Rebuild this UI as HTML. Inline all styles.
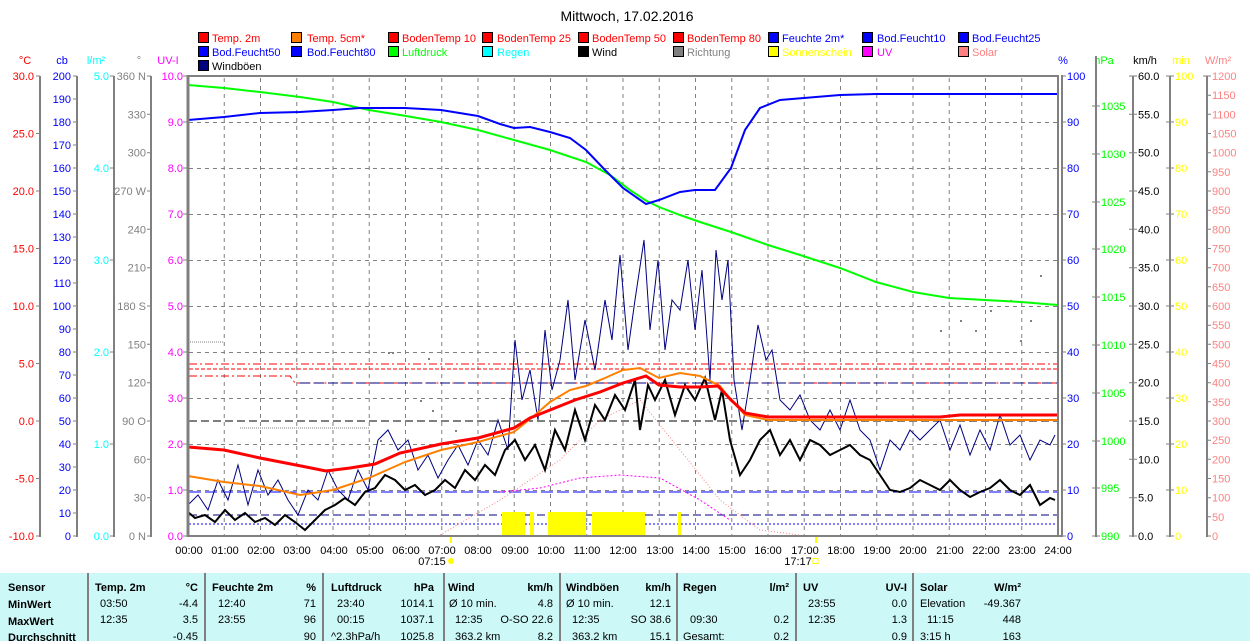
<!DOCTYPE html>
<html><head><meta charset="utf-8"><style>
html,body{margin:0;padding:0;background:#fff;}
svg{display:block;font-family:"Liberation Sans",sans-serif;font-size:11px;}
</style></head><body>
<svg width="1250" height="641" viewBox="0 0 1250 641" xmlns="http://www.w3.org/2000/svg">
<rect width="1250" height="641" fill="#fff"/>
<text x="627" y="21" text-anchor="middle" font-size="14" fill="#000">Mittwoch, 17.02.2016</text>

<!-- legend -->
<g stroke="#000" stroke-width="1">
<rect x="198.5" y="32.5" width="10" height="10" fill="#f00"/><rect x="291.5" y="32.5" width="10" height="10" fill="#ff8000"/><rect x="388.5" y="32.5" width="10" height="10" fill="#f00"/><rect x="482.5" y="32.5" width="10" height="10" fill="#f00"/><rect x="578.5" y="32.5" width="10" height="10" fill="#f00"/><rect x="673.5" y="32.5" width="10" height="10" fill="#f00"/><rect x="768.5" y="32.5" width="10" height="10" fill="#00f"/><rect x="862.5" y="32.5" width="10" height="10" fill="#00f"/><rect x="958.5" y="32.5" width="10" height="10" fill="#00f"/>
<rect x="198.5" y="46.5" width="10" height="10" fill="#00f"/><rect x="291.5" y="46.5" width="10" height="10" fill="#00f"/><rect x="388.5" y="46.5" width="10" height="10" fill="#0f0"/><rect x="482.5" y="46.5" width="10" height="10" fill="#0ff"/><rect x="578.5" y="46.5" width="10" height="10" fill="#000"/><rect x="673.5" y="46.5" width="10" height="10" fill="#808080"/><rect x="768.5" y="46.5" width="10" height="10" fill="#ff0"/><rect x="862.5" y="46.5" width="10" height="10" fill="#f0f"/><rect x="958.5" y="46.5" width="10" height="10" fill="#ff8080"/>
<rect x="198.5" y="60.5" width="10" height="10" fill="#000080"/>
</g>
<g>
<text x="212" y="42" fill="#f00">Temp. 2m</text><text x="307" y="42" fill="#f00">Temp. 5cm*</text><text x="402" y="42" fill="#f00">BodenTemp 10</text><text x="497" y="42" fill="#f00">BodenTemp 25</text><text x="592" y="42" fill="#f00">BodenTemp 50</text><text x="687" y="42" fill="#f00">BodenTemp 80</text><text x="782" y="42" fill="#00f">Feuchte 2m*</text><text x="877" y="42" fill="#00f">Bod.Feucht10</text><text x="972" y="42" fill="#00f">Bod.Feucht25</text>
<text x="212" y="56" fill="#00f">Bod.Feucht50</text><text x="307" y="56" fill="#00f">Bod.Feucht80</text><text x="402" y="56" fill="#0f0">Luftdruck</text><text x="497" y="56" fill="#0ff">Regen</text><text x="592" y="56" fill="#000">Wind</text><text x="687" y="56" fill="#808080">Richtung</text><text x="782" y="56" fill="#ff0">Sonnenschein</text><text x="877" y="56" fill="#f0f">UV</text><text x="972" y="56" fill="#ff8080">Solar</text>
<text x="212" y="70" fill="#000">Windböen</text>
</g>

<!-- unit labels -->
<text x="25" y="64" fill="#f00" text-anchor="middle">°C</text>
<text x="62" y="64" fill="#00f" text-anchor="middle">cb</text>
<text x="96" y="64" fill="#0ff" text-anchor="middle">l/m²</text>
<text x="139" y="64" fill="#808080" text-anchor="middle">°</text>
<text x="168" y="64" fill="#f0f" text-anchor="middle">UV-I</text>
<text x="1063" y="64" fill="#00f" text-anchor="middle">%</text>
<text x="1104" y="64" fill="#0f0" text-anchor="middle">hPa</text>
<text x="1145" y="64" fill="#000" text-anchor="middle">km/h</text>
<text x="1181" y="64" fill="#ff0" text-anchor="middle">min</text>
<text x="1218" y="64" fill="#ff8080" text-anchor="middle">W/m²</text>

<!-- axis lines -->
<g stroke="#808080" stroke-width="2">
<line x1="40" y1="76" x2="40" y2="537"/><line x1="77" y1="76" x2="77" y2="537"/><line x1="114" y1="76" x2="114" y2="537"/><line x1="151" y1="76" x2="151" y2="537"/>
<line x1="1096" y1="56" x2="1096" y2="537"/><line x1="1133" y1="76" x2="1133" y2="537"/><line x1="1170" y1="76" x2="1170" y2="537"/><line x1="1207" y1="76" x2="1207" y2="537"/>
</g>

<!-- grid -->
<g stroke="#808080" stroke-width="1" stroke-dasharray="4,4">
<line x1="224.25" y1="78" x2="224.25" y2="535"/><line x1="260.5" y1="78" x2="260.5" y2="535"/><line x1="296.75" y1="78" x2="296.75" y2="535"/><line x1="333" y1="78" x2="333" y2="535"/><line x1="369.25" y1="78" x2="369.25" y2="535"/><line x1="405.5" y1="78" x2="405.5" y2="535"/><line x1="441.75" y1="78" x2="441.75" y2="535"/><line x1="478" y1="78" x2="478" y2="535"/><line x1="514.25" y1="78" x2="514.25" y2="535"/><line x1="550.5" y1="78" x2="550.5" y2="535"/><line x1="586.75" y1="78" x2="586.75" y2="535"/><line x1="623" y1="78" x2="623" y2="535"/><line x1="659.25" y1="78" x2="659.25" y2="535"/><line x1="695.5" y1="78" x2="695.5" y2="535"/><line x1="731.75" y1="78" x2="731.75" y2="535"/><line x1="768" y1="78" x2="768" y2="535"/><line x1="804.25" y1="78" x2="804.25" y2="535"/><line x1="840.5" y1="78" x2="840.5" y2="535"/><line x1="876.75" y1="78" x2="876.75" y2="535"/><line x1="913" y1="78" x2="913" y2="535"/><line x1="949.25" y1="78" x2="949.25" y2="535"/><line x1="985.5" y1="78" x2="985.5" y2="535"/><line x1="1021.75" y1="78" x2="1021.75" y2="535"/>
<line x1="189" y1="122.5" x2="1057" y2="122.5"/><line x1="189" y1="168.5" x2="1057" y2="168.5"/><line x1="189" y1="214.5" x2="1057" y2="214.5"/><line x1="189" y1="260.5" x2="1057" y2="260.5"/><line x1="189" y1="306.5" x2="1057" y2="306.5"/><line x1="189" y1="352.5" x2="1057" y2="352.5"/><line x1="189" y1="398.5" x2="1057" y2="398.5"/><line x1="189" y1="444.5" x2="1057" y2="444.5"/><line x1="189" y1="490.5" x2="1057" y2="490.5"/>
</g>

<!-- horizontal reference lines -->
<g fill="none" stroke-width="1">
<polyline points="189,364 1057,364" stroke="#f00" stroke-dasharray="8,3,2,3"/>
<polyline points="189,369 1057,369" stroke="#f00" stroke-dasharray="4,2"/>
<polyline points="189,376 290,376 295,383 1057,383" stroke="#f00" stroke-dasharray="8,3,2,3"/>
<polyline points="300,383 1057,383" stroke="#000080" stroke-dasharray="10,4"/>
<polyline points="189,421 1057,421" stroke="#000" stroke-dasharray="8,4"/>
<polyline points="189,492 1057,492" stroke="#00f" stroke-dasharray="12,4"/>
<polyline points="189,515 1057,515" stroke="#000080" stroke-dasharray="8,4"/>
<polyline points="189,524 1057,524" stroke="#00f" stroke-dasharray="2,2"/>
<polyline points="190,342 224,342" stroke="#808080" stroke-dasharray="1,1"/>
<polyline points="240,428 370,428" stroke="#808080" stroke-dasharray="1,1"/>
<polyline points="500,492 540,488 580,478 620,475 660,478 700,500 730,520" stroke="#f0f" stroke-dasharray="2,2"/>
<polyline points="440,535 500,500 560,460 600,420 640,400 680,450 720,500 760,530 800,535" stroke="#ff8080" stroke-dasharray="1,2"/>
</g>

<!-- sunshine bars -->
<g fill="#ff0">
<rect x="502" y="512" width="23" height="23"/><rect x="530" y="512" width="4" height="23"/><rect x="548" y="512" width="38" height="23"/><rect x="592" y="512" width="53" height="23"/><rect x="678" y="512" width="3" height="23"/>
</g>

<!-- richtung dots -->
<g fill="#808080">
<rect x="388" y="352" width="2" height="2"/><rect x="392" y="352" width="2" height="2"/><rect x="428" y="358" width="2" height="2"/><rect x="420" y="400" width="2" height="2"/><rect x="432" y="410" width="2" height="2"/><rect x="380" y="440" width="2" height="2"/><rect x="455" y="430" width="2" height="2"/><rect x="960" y="320" width="2" height="2"/><rect x="975" y="330" width="2" height="2"/><rect x="990" y="310" width="2" height="2"/><rect x="1010" y="300" width="2" height="2"/><rect x="1030" y="320" width="2" height="2"/><rect x="1040" y="275" width="2" height="2"/><rect x="940" y="330" width="2" height="2"/><rect x="1020" y="340" width="2" height="2"/>
</g>

<!-- gusts (navy) -->
<polyline fill="none" stroke="#000080" stroke-width="1" points="188,505 198,495 208,510 218,480 228,500 238,465 248,505 258,470 268,495 278,480 288,500 298,515 308,490 318,500 328,470 338,490 348,500 358,470 368,490 378,440 388,430 398,450 408,440 418,470 428,455 438,478 448,460 458,445 468,465 478,440 488,455 498,420 508,450 515,340 522,400 530,370 538,420 545,330 552,390 560,360 568,300 575,380 585,320 595,370 605,300 612,340 620,255 628,350 635,300 644,240 650,330 658,260 665,350 672,300 680,310 688,260 695,330 702,270 710,380 716,250 722,300 728,260 734,380 742,430 750,380 758,325 766,360 772,350 780,400 790,410 800,395 810,420 820,430 830,410 840,430 850,400 860,430 870,440 880,470 890,440 900,450 910,430 920,440 930,430 940,420 950,450 960,425 970,455 980,430 990,450 1000,415 1010,445 1020,435 1030,460 1040,440 1050,445 1055,435"/>

<!-- wind black -->
<polyline fill="none" stroke="#000" stroke-width="2" points="188,512 195,518 205,515 215,522 225,510 235,520 245,513 255,522 265,518 275,525 285,515 295,522 305,530 315,520 325,510 335,505 345,498 355,505 365,492 375,488 385,475 395,480 405,490 415,485 425,495 435,490 445,480 455,488 465,470 475,480 485,465 495,475 505,450 515,440 525,460 535,445 545,470 555,430 565,450 575,410 585,440 595,405 605,420 615,395 625,410 635,380 640,430 648,385 655,400 665,380 675,415 685,385 695,400 705,378 715,420 722,390 730,440 740,475 750,460 760,440 770,430 780,455 790,440 800,460 810,440 820,445 830,455 840,450 850,445 860,455 870,460 880,475 890,490 900,492 910,488 920,480 930,485 940,490 950,480 960,490 970,497 980,492 990,488 1000,480 1010,490 1020,495 1030,485 1040,505 1050,498 1055,500"/>

<!-- temp 5cm orange -->
<polyline fill="none" stroke="#ff8000" stroke-width="2" points="188,476 224,482 260,486 300,495 333,490 369,478 405,462 441,450 478,442 514,432 535,415 550,402 570,390 586,386 605,378 623,370 640,368 659,378 680,373 700,376 720,386 731,400 745,415 768,420 1058,420"/>
<!-- temp 2m red -->
<polyline fill="none" stroke="#f00" stroke-width="3" points="188,447 224,450 260,458 296,465 326,471 350,468 375,464 400,453 441,444 478,438 514,428 530,418 550,410 575,400 600,392 623,383 646,376 659,385 680,387 700,387 718,386 731,400 745,413 768,417 940,417 960,415 1058,415"/>

<!-- pressure green -->
<polyline fill="none" stroke="#0f0" stroke-width="2" points="188,85 224,88 260,92 300,97 333,102 369,110 400,115 441,122 478,130 514,140 550,150 586,162 610,175 630,190 645,200 659,207 680,215 700,222 731,232 768,245 800,255 840,268 876,282 913,292 949,298 985,300 1021,302 1058,305"/>

<!-- humidity blue -->
<polyline fill="none" stroke="#00f" stroke-width="2" points="188,120 224,117 260,113 300,112 333,110 360,108 405,108 441,110 478,116 500,124 514,128 530,127 550,132 570,138 586,150 605,170 623,188 646,204 659,200 680,192 695,190 715,190 731,168 745,130 760,108 780,100 804,98 840,95 876,94 1058,94"/>

<!-- plot frame -->
<g stroke="#808080" fill="none">
<line x1="188" y1="76" x2="1058" y2="76" stroke-width="2"/>
<line x1="188" y1="75" x2="188" y2="537" stroke-width="3"/>
<line x1="1058" y1="75" x2="1058" y2="537" stroke-width="2"/>
<line x1="1062" y1="75" x2="1062" y2="537" stroke-width="2"/>
<line x1="188" y1="536" x2="1062" y2="536" stroke-width="2"/>
</g>

<!-- ticks -->
<g stroke="#808080" stroke-width="1">
<path d="M36 76H40M36 133.5H40M36 191H40M36 248.5H40M36 306H40M36 363.5H40M36 421H40M36 478.5H40M36 536H40"/>
<path d="M73 76H77M73 99H77M73 122H77M73 145H77M73 168H77M73 191H77M73 214H77M73 237H77M73 260H77M73 283H77M73 306H77M73 329H77M73 352H77M73 375H77M73 398H77M73 421H77M73 444H77M73 467H77M73 490H77M73 513H77M73 536H77"/>
<path d="M110 76H114M110 168H114M110 260H114M110 352H114M110 444H114M110 536H114"/>
<path d="M147 76H151M147 114.3H151M147 152.7H151M147 191H151M147 229.3H151M147 267.7H151M147 306H151M147 344.3H151M147 382.7H151M147 421H151M147 459.3H151M147 497.7H151M147 536H151"/>
<path d="M1062 76H1066M1062 122H1066M1062 168H1066M1062 214H1066M1062 260H1066M1062 306H1066M1062 352H1066M1062 398H1066M1062 444H1066M1062 490H1066M1062 536H1066"/>
<path d="M1092 106H1100M1092 154H1100M1092 202H1100M1092 249H1100M1092 297H1100M1092 345H1100M1092 393H1100M1092 441H1100M1092 488H1100M1092 536H1100"/>
<path d="M1129 76H1137M1129 114.3H1137M1129 152.7H1137M1129 191H1137M1129 229.3H1137M1129 267.7H1137M1129 306H1137M1129 344.3H1137M1129 382.7H1137M1129 421H1137M1129 459.3H1137M1129 497.7H1137M1129 536H1137"/>
<path d="M1166 76H1174M1166 122H1174M1166 168H1174M1166 214H1174M1166 260H1174M1166 306H1174M1166 352H1174M1166 398H1174M1166 444H1174M1166 490H1174M1166 536H1174"/>
<path d="M1203 76H1211M1207 95.2H1211M1207 114.3H1211M1207 133.5H1211M1207 152.7H1211M1207 171.8H1211M1207 191H1211M1207 210.2H1211M1207 229.3H1211M1207 248.5H1211M1207 267.7H1211M1207 286.8H1211M1207 306H1211M1207 325.2H1211M1207 344.3H1211M1207 363.5H1211M1207 382.7H1211M1207 401.8H1211M1207 421H1211M1207 440.2H1211M1207 459.3H1211M1207 478.5H1211M1207 497.7H1211M1207 516.8H1211M1207 536H1211"/>
<path d="M183 76H188M183 122H188M183 168H188M183 214H188M183 260H188M183 306H188M183 352H188M183 398H188M183 444H188M183 490H188M183 536H188"/>
</g>

<!-- left labels -->
<g fill="#f00" text-anchor="end"><text x="34" y="80">30.0</text><text x="34" y="137.5">25.0</text><text x="34" y="195">20.0</text><text x="34" y="252.5">15.0</text><text x="34" y="310">10.0</text><text x="34" y="367.5">5.0</text><text x="34" y="425">0.0</text><text x="34" y="482.5">-5.0</text><text x="34" y="540">-10.0</text></g>
<g fill="#00f" text-anchor="end"><text x="71" y="80">200</text><text x="71" y="103">190</text><text x="71" y="126">180</text><text x="71" y="149">170</text><text x="71" y="172">160</text><text x="71" y="195">150</text><text x="71" y="218">140</text><text x="71" y="241">130</text><text x="71" y="264">120</text><text x="71" y="287">110</text><text x="71" y="310">100</text><text x="71" y="333">90</text><text x="71" y="356">80</text><text x="71" y="379">70</text><text x="71" y="402">60</text><text x="71" y="425">50</text><text x="71" y="448">40</text><text x="71" y="471">30</text><text x="71" y="494">20</text><text x="71" y="517">10</text><text x="71" y="540">0</text></g>
<g fill="#0ff" text-anchor="end"><text x="109" y="80">5.0</text><text x="109" y="172">4.0</text><text x="109" y="264">3.0</text><text x="109" y="356">2.0</text><text x="109" y="448">1.0</text><text x="109" y="540">0.0</text></g>
<g fill="#808080" text-anchor="end"><text x="146" y="80">360 N</text><text x="146" y="118.3">330</text><text x="146" y="156.7">300</text><text x="146" y="195">270 W</text><text x="146" y="233.3">240</text><text x="146" y="271.7">210</text><text x="146" y="310">180 S</text><text x="146" y="348.3">150</text><text x="146" y="386.7">120</text><text x="146" y="425">90 O</text><text x="146" y="463.3">60</text><text x="146" y="501.7">30</text><text x="146" y="540">0 N</text></g>
<g fill="#f0f" text-anchor="end"><text x="183" y="80">10.0</text><text x="183" y="126">9.0</text><text x="183" y="172">8.0</text><text x="183" y="218">7.0</text><text x="183" y="264">6.0</text><text x="183" y="310">5.0</text><text x="183" y="356">4.0</text><text x="183" y="402">3.0</text><text x="183" y="448">2.0</text><text x="183" y="494">1.0</text><text x="183" y="540">0.0</text></g>

<!-- right labels -->
<g fill="#00f"><text x="1067" y="80">100</text><text x="1067" y="126">90</text><text x="1067" y="172">80</text><text x="1067" y="218">70</text><text x="1067" y="264">60</text><text x="1067" y="310">50</text><text x="1067" y="356">40</text><text x="1067" y="402">30</text><text x="1067" y="448">20</text><text x="1067" y="494">10</text><text x="1067" y="540">0</text></g>
<g fill="#0f0"><text x="1101" y="110">1035</text><text x="1101" y="158">1030</text><text x="1101" y="206">1025</text><text x="1101" y="253">1020</text><text x="1101" y="301">1015</text><text x="1101" y="349">1010</text><text x="1101" y="397">1005</text><text x="1101" y="445">1000</text><text x="1101" y="492">995</text><text x="1101" y="540">990</text></g>
<g fill="#000"><text x="1138" y="80">60.0</text><text x="1138" y="118.3">55.0</text><text x="1138" y="156.7">50.0</text><text x="1138" y="195">45.0</text><text x="1138" y="233.3">40.0</text><text x="1138" y="271.7">35.0</text><text x="1138" y="310">30.0</text><text x="1138" y="348.3">25.0</text><text x="1138" y="386.7">20.0</text><text x="1138" y="425">15.0</text><text x="1138" y="463.3">10.0</text><text x="1138" y="501.7">5.0</text><text x="1138" y="540">0.0</text></g>
<g fill="#ff0"><text x="1175" y="80">100</text><text x="1175" y="126">90</text><text x="1175" y="172">80</text><text x="1175" y="218">70</text><text x="1175" y="264">60</text><text x="1175" y="310">50</text><text x="1175" y="356">40</text><text x="1175" y="402">30</text><text x="1175" y="448">20</text><text x="1175" y="494">10</text><text x="1175" y="540">0</text></g>
<g fill="#ff8080"><text x="1212" y="80">1200</text><text x="1212" y="99.2">1150</text><text x="1212" y="118.3">1100</text><text x="1212" y="137.5">1050</text><text x="1212" y="156.7">1000</text><text x="1212" y="175.8">950</text><text x="1212" y="195">900</text><text x="1212" y="214.2">850</text><text x="1212" y="233.3">800</text><text x="1212" y="252.5">750</text><text x="1212" y="271.7">700</text><text x="1212" y="290.8">650</text><text x="1212" y="310">600</text><text x="1212" y="329.2">550</text><text x="1212" y="348.3">500</text><text x="1212" y="367.5">450</text><text x="1212" y="386.7">400</text><text x="1212" y="405.8">350</text><text x="1212" y="425">300</text><text x="1212" y="444.2">250</text><text x="1212" y="463.3">200</text><text x="1212" y="482.5">150</text><text x="1212" y="501.7">100</text><text x="1212" y="520.8">50</text><text x="1212" y="540">0</text></g>

<!-- time labels -->
<g fill="#000" text-anchor="middle"><text x="189" y="554">00:00</text><text x="225" y="554">01:00</text><text x="261" y="554">02:00</text><text x="297" y="554">03:00</text><text x="334" y="554">04:00</text><text x="370" y="554">05:00</text><text x="406" y="554">06:00</text><text x="442" y="554">07:00</text><text x="478" y="554">08:00</text><text x="515" y="554">09:00</text><text x="551" y="554">10:00</text><text x="587" y="554">11:00</text><text x="623" y="554">12:00</text><text x="660" y="554">13:00</text><text x="696" y="554">14:00</text><text x="732" y="554">15:00</text><text x="768" y="554">16:00</text><text x="805" y="554">17:00</text><text x="841" y="554">18:00</text><text x="877" y="554">19:00</text><text x="913" y="554">20:00</text><text x="950" y="554">21:00</text><text x="986" y="554">22:00</text><text x="1022" y="554">23:00</text><text x="1058" y="554">24:00</text>
<text x="432" y="565">07:15</text><text x="798" y="565">17:17</text></g>
<rect x="450" y="537" width="2" height="6" fill="#ff0"/><circle cx="451" cy="561" r="3" fill="#ff0"/>
<rect x="815" y="537" width="2" height="6" fill="#ff0"/><rect x="813" y="558.5" width="5" height="5" fill="none" stroke="#ff0"/>

<!-- table -->
<rect x="0" y="573" width="1250" height="68" fill="#ccf8f8"/>
<g stroke="#808080" stroke-width="2"><line x1="88" y1="573" x2="88" y2="641"/><line x1="205" y1="573" x2="205" y2="641"/><line x1="323" y1="573" x2="323" y2="641"/><line x1="444" y1="573" x2="444" y2="641"/><line x1="560" y1="573" x2="560" y2="641"/><line x1="677" y1="573" x2="677" y2="641"/><line x1="796" y1="573" x2="796" y2="641"/><line x1="913" y1="573" x2="913" y2="641"/></g>
<g fill="#000" font-weight="bold">
<text x="8" y="591">Sensor</text><text x="8" y="608">MinWert</text><text x="8" y="625">MaxWert</text><text x="8" y="641">Durchschnitt</text>
<text x="95" y="591">Temp. 2m</text><text x="198" y="591" text-anchor="end">°C</text>
<text x="212" y="591">Feuchte 2m</text><text x="316" y="591" text-anchor="end">%</text>
<text x="331" y="591">Luftdruck</text><text x="434" y="591" text-anchor="end">hPa</text>
<text x="448" y="591">Wind</text><text x="553" y="591" text-anchor="end">km/h</text>
<text x="566" y="591">Windböen</text><text x="671" y="591" text-anchor="end">km/h</text>
<text x="683" y="591">Regen</text><text x="789" y="591" text-anchor="end">l/m²</text>
<text x="803" y="591">UV</text><text x="907" y="591" text-anchor="end">UV-I</text>
<text x="920" y="591">Solar</text><text x="1021" y="591" text-anchor="end">W/m²</text>
</g>
<g fill="#000">
<text x="100" y="607">03:50</text><text x="198" y="607" text-anchor="end">-4.4</text>
<text x="100" y="623">12:35</text><text x="198" y="623" text-anchor="end">3.5</text>
<text x="198" y="640" text-anchor="end">-0.45</text>
<text x="218" y="607">12:40</text><text x="316" y="607" text-anchor="end">71</text>
<text x="218" y="623">23:55</text><text x="316" y="623" text-anchor="end">96</text>
<text x="316" y="640" text-anchor="end">90</text>
<text x="337" y="607">23:40</text><text x="434" y="607" text-anchor="end">1014.1</text>
<text x="337" y="623">00:15</text><text x="434" y="623" text-anchor="end">1037.1</text>
<text x="331" y="640">^2.3hPa/h</text><text x="434" y="640" text-anchor="end">1025.8</text>
<text x="449" y="607">Ø 10 min.</text><text x="553" y="607" text-anchor="end">4.8</text>
<text x="455" y="623">12:35</text><text x="553" y="623" text-anchor="end">O-SO 22.6</text>
<text x="455" y="640">363.2 km</text><text x="553" y="640" text-anchor="end">8.2</text>
<text x="566" y="607">Ø 10 min.</text><text x="671" y="607" text-anchor="end">12.1</text>
<text x="572" y="623">12:35</text><text x="671" y="623" text-anchor="end">SO 38.6</text>
<text x="572" y="640">363.2 km</text><text x="671" y="640" text-anchor="end">15.1</text>
<text x="690" y="623">09:30</text><text x="789" y="623" text-anchor="end">0.2</text>
<text x="683" y="640">Gesamt:</text><text x="789" y="640" text-anchor="end">0.2</text>
<text x="808" y="607">23:55</text><text x="907" y="607" text-anchor="end">0.0</text>
<text x="808" y="623">12:35</text><text x="907" y="623" text-anchor="end">1.3</text>
<text x="907" y="640" text-anchor="end">0.9</text>
<text x="920" y="607">Elevation</text><text x="1021" y="607" text-anchor="end">-49.367</text>
<text x="927" y="623">11:15</text><text x="1021" y="623" text-anchor="end">448</text>
<text x="920" y="640">3:15 h</text><text x="1021" y="640" text-anchor="end">163</text>
</g>
</svg>
</body></html>
